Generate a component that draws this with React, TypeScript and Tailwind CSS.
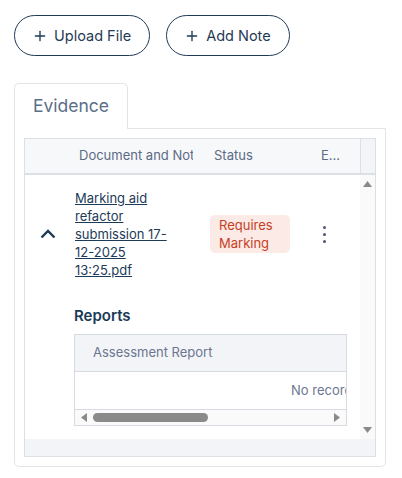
import React from 'react';
import { Plus } from 'lucide-react';

const Tri = ({ dir }: { dir: 'up' | 'down' | 'left' | 'right' }) => {
  const pts = {
    up: '0,6 4.5,0 9,6',
    down: '0,0 9,0 4.5,6',
    left: '6,0 6,9 0,4.5',
    right: '0,0 6,4.5 0,9',
  }[dir];
  const vert = dir === 'up' || dir === 'down';
  return (
    <svg width={vert ? 9 : 6} height={vert ? 6 : 9} viewBox={vert ? '0 0 9 6' : '0 0 6 9'}>
      <polygon points={pts} fill="#8a8a8a" />
    </svg>
  );
};

const PillButton = ({ label }: { label: string }) => (
  <button className="flex items-center h-[41px] rounded-full border border-[#1f3a56] pl-[17px] pr-[18px] gap-[6px] text-[14.5px] text-[#1f3a56] bg-white">
    <Plus className="w-4 h-4" strokeWidth={2} />
    <span>{label}</span>
  </button>
);

export default function App() {
  return (
    <div className="min-h-screen bg-white font-['Inter',sans-serif] pt-[15px] pl-[14px] pr-[16px]">
      {/* actions */}
      <div className="flex gap-4">
        <PillButton label="Upload File" />
        <PillButton label="Add Note" />
      </div>

      {/* tab */}
      <div className="mt-[27px] flex">
        <div className="relative z-10 -mb-px flex h-[46px] items-center rounded-t-[5px] border border-b-0 border-[#e2e4e8] bg-white px-[18px] text-[17.5px] text-[#5a6f87]">
          Evidence
        </div>
      </div>

      {/* panel */}
      <div className="rounded-b-[5px] border border-[#e2e4e8] p-[9px]">
        <div className="flex flex-col border border-[#dcdfe3]">
          {/* header */}
          <div className="flex h-[36px]">
            <div className="flex flex-1 items-center overflow-hidden border-b-2 border-[#dcdfe3] bg-[#f7f8fa] text-[13px] text-[#5b6b86]">
              <div className="w-[46px] shrink-0" />
              <div className="w-[125px] shrink-0 pl-[8px] pr-[3px]">
                <div className="overflow-hidden whitespace-nowrap">Document and Notes</div>
              </div>
              <div className="w-[111px] shrink-0 pl-[18px]">Status</div>
              <div className="flex-1 pl-[14px]">E...</div>
            </div>
            <div className="w-[15px] border-b-2 border-l border-[#dcdfe3] bg-[#f3f4f7]" />
          </div>

          {/* body */}
          <div className="flex h-[264px]">
            <div className="flex-1 overflow-hidden">
              <div className="flex items-center pt-[14px]">
                <div className="flex w-[46px] shrink-0 justify-center">
                  <svg width="16" height="10" viewBox="0 0 16 10">
                    <polyline points="1.5,8.5 8,2 14.5,8.5" fill="none" stroke="#1b3a57" strokeWidth="2.4" />
                  </svg>
                </div>
                <div className="w-[125px] shrink-0 pl-[4px]">
                  <a className="block w-[100px] text-[13px] leading-[18px] text-[#1d3b57] underline">
                    Marking aid refactor submission 17-12-2025 13:25.pdf
                  </a>
                </div>
                <div className="w-[111px] shrink-0 pl-[14px]">
                  <div className="w-[80px] rounded-[5px] bg-[#fbeae6] px-[9px] py-[1px] text-[13px] leading-[18px] text-[#c63f1f]">
                    Requires Marking
                  </div>
                </div>
                <div className="flex flex-1 flex-col gap-[4px] pl-[16px]">
                  <span className="h-[3px] w-[3px] rounded-full bg-[#4b5673]" />
                  <span className="h-[3px] w-[3px] rounded-full bg-[#4b5673]" />
                  <span className="h-[3px] w-[3px] rounded-full bg-[#4b5673]" />
                </div>
              </div>

              {/* details */}
              <div className="mt-[27px] pl-[49px] pr-[13px]">
                <h3 className="text-[15px] font-semibold leading-[20px] text-[#1b3a57]">Reports</h3>
                <div className="mt-[8px] border border-[#d6dbe2]">
                  <div className="flex h-[37px] items-center border-b border-[#d6dbe2] bg-[#f3f4f8] px-[18px] text-[13px] text-[#6b7690]">
                    Assessment Report
                  </div>
                  <div className="flex h-[37px] items-center overflow-hidden whitespace-nowrap pl-[216px] text-[13px] text-[#6b7690]">
                    No records to display
                  </div>
                  <div className="flex h-[16px] items-center border-t border-[#d6dbe2] bg-[#fafafa] pl-[6px] pr-[6px]">
                    <Tri dir="left" />
                    <div className="ml-[6px] h-[9px] w-[115px] rounded-full bg-[#8a8a8a]" />
                    <div className="flex-1" />
                    <Tri dir="right" />
                  </div>
                </div>
              </div>
            </div>
            <div className="flex w-[15px] flex-col items-center justify-between bg-[#fafafa] pt-[6px] pb-[6px]">
              <Tri dir="up" />
              <Tri dir="down" />
            </div>
          </div>

          {/* footer */}
          <div className="h-[17px] bg-[#f3f4f7]" />
        </div>
      </div>
    </div>
  );
}
